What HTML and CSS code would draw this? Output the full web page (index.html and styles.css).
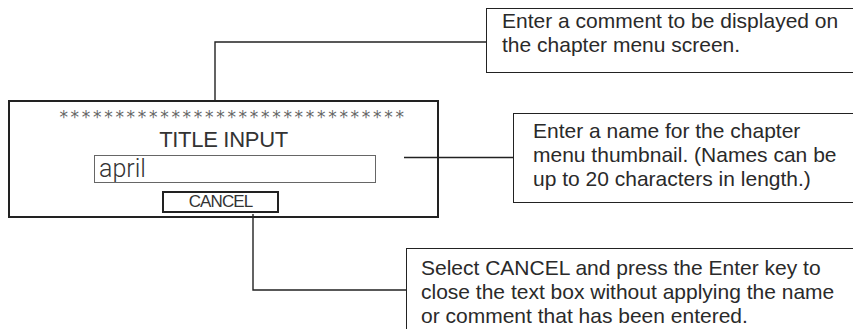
FILE: index.html
```html
<!DOCTYPE html>
<html lang="en">
<head>
<meta charset="utf-8">
<title>Title input</title>
<link rel="stylesheet" href="styles.css">
</head>
<body>
<div class="canvas">
  <div class="dialog">
    <div class="stars">*******************************</div>
    <div class="dialog-title">TITLE INPUT</div>
    <div class="field">april</div>
    <div class="btn">CANCEL</div>
  </div>

  <div class="callout callout-top">Enter a comment to be displayed on<br>the chapter menu screen.</div>
  <div class="callout callout-right">Enter a name for the chapter<br>menu thumbnail. (Names can be<br>up to 20 characters in length.)</div>
  <div class="callout callout-bottom">Select CANCEL and press the Enter key to<br>close the text box without applying the name<br>or comment that has been entered.</div>

  <svg class="leaders" width="853" height="329" viewBox="0 0 853 329" aria-hidden="true">
    <polyline points="215,100 215,42 486,42" />
    <polyline points="404,157.5 513,157.5" />
    <polyline points="253,214 253,290 406,290" />
  </svg>
</div>
</body>
</html>
```
FILE: styles.css
```css
html, body {
  margin: 0;
  padding: 0;
  background: #fff;
}

.canvas {
  position: relative;
  width: 853px;
  height: 329px;
  overflow: hidden;
  background: #fff;
  font-family: "Liberation Sans", Arial, sans-serif;
  color: #222;
}

.leaders {
  position: absolute;
  left: 0;
  top: 0;
  pointer-events: none;
}

.leaders polyline {
  fill: none;
  stroke: #222;
  stroke-width: 1.4;
}

.dialog {
  position: absolute;
  left: 8px;
  top: 100px;
  width: 431px;
  height: 118px;
  box-sizing: border-box;
  border: 2px solid #222;
  background: #fff;
  display: flex;
  flex-direction: column;
  align-items: center;
}

.stars {
  margin-top: 6px;
  margin-left: 19px;
  font-family: "DejaVu Sans", sans-serif;
  font-size: 17px;
  line-height: 19px;
  letter-spacing: 2.7px;
  color: #666;
  white-space: nowrap;
}

.dialog-title {
  margin-top: 1px;
  font-size: 22px;
  line-height: 24px;
  letter-spacing: -0.3px;
  color: #333;
}

.field {
  margin-top: 3px;
  margin-left: 23px;
  width: 282px;
  height: 28px;
  box-sizing: border-box;
  border: 1px solid #666;
  padding-left: 4px;
  font-family: "Roboto", "Liberation Sans", sans-serif;
  font-weight: 300;
  font-size: 25px;
  line-height: 26px;
  color: #333;
}

.btn {
  margin-top: 8px;
  margin-left: -6px;
  width: 117px;
  height: 22px;
  box-sizing: border-box;
  border: 2px solid #222;
  display: flex;
  align-items: center;
  justify-content: center;
  font-size: 17px;
  letter-spacing: -0.9px;
  line-height: 18px;
  color: #333;
}

.callout {
  position: absolute;
  box-sizing: border-box;
  border: 1px solid #222;
  background: #fff;
  font-size: 21px;
  line-height: 24px;
  color: #2a2a2a;
  white-space: nowrap;
}

.callout-top {
  left: 486px;
  top: 8px;
  width: 420px;
  height: 65px;
  padding: 0 0 0 15px;
}

.callout-right {
  left: 513px;
  top: 113px;
  width: 400px;
  height: 90px;
  padding: 5px 0 0 19px;
}

.callout-bottom {
  left: 406px;
  top: 248px;
  width: 500px;
  height: 120px;
  padding: 7px 0 0 14px;
}
```
